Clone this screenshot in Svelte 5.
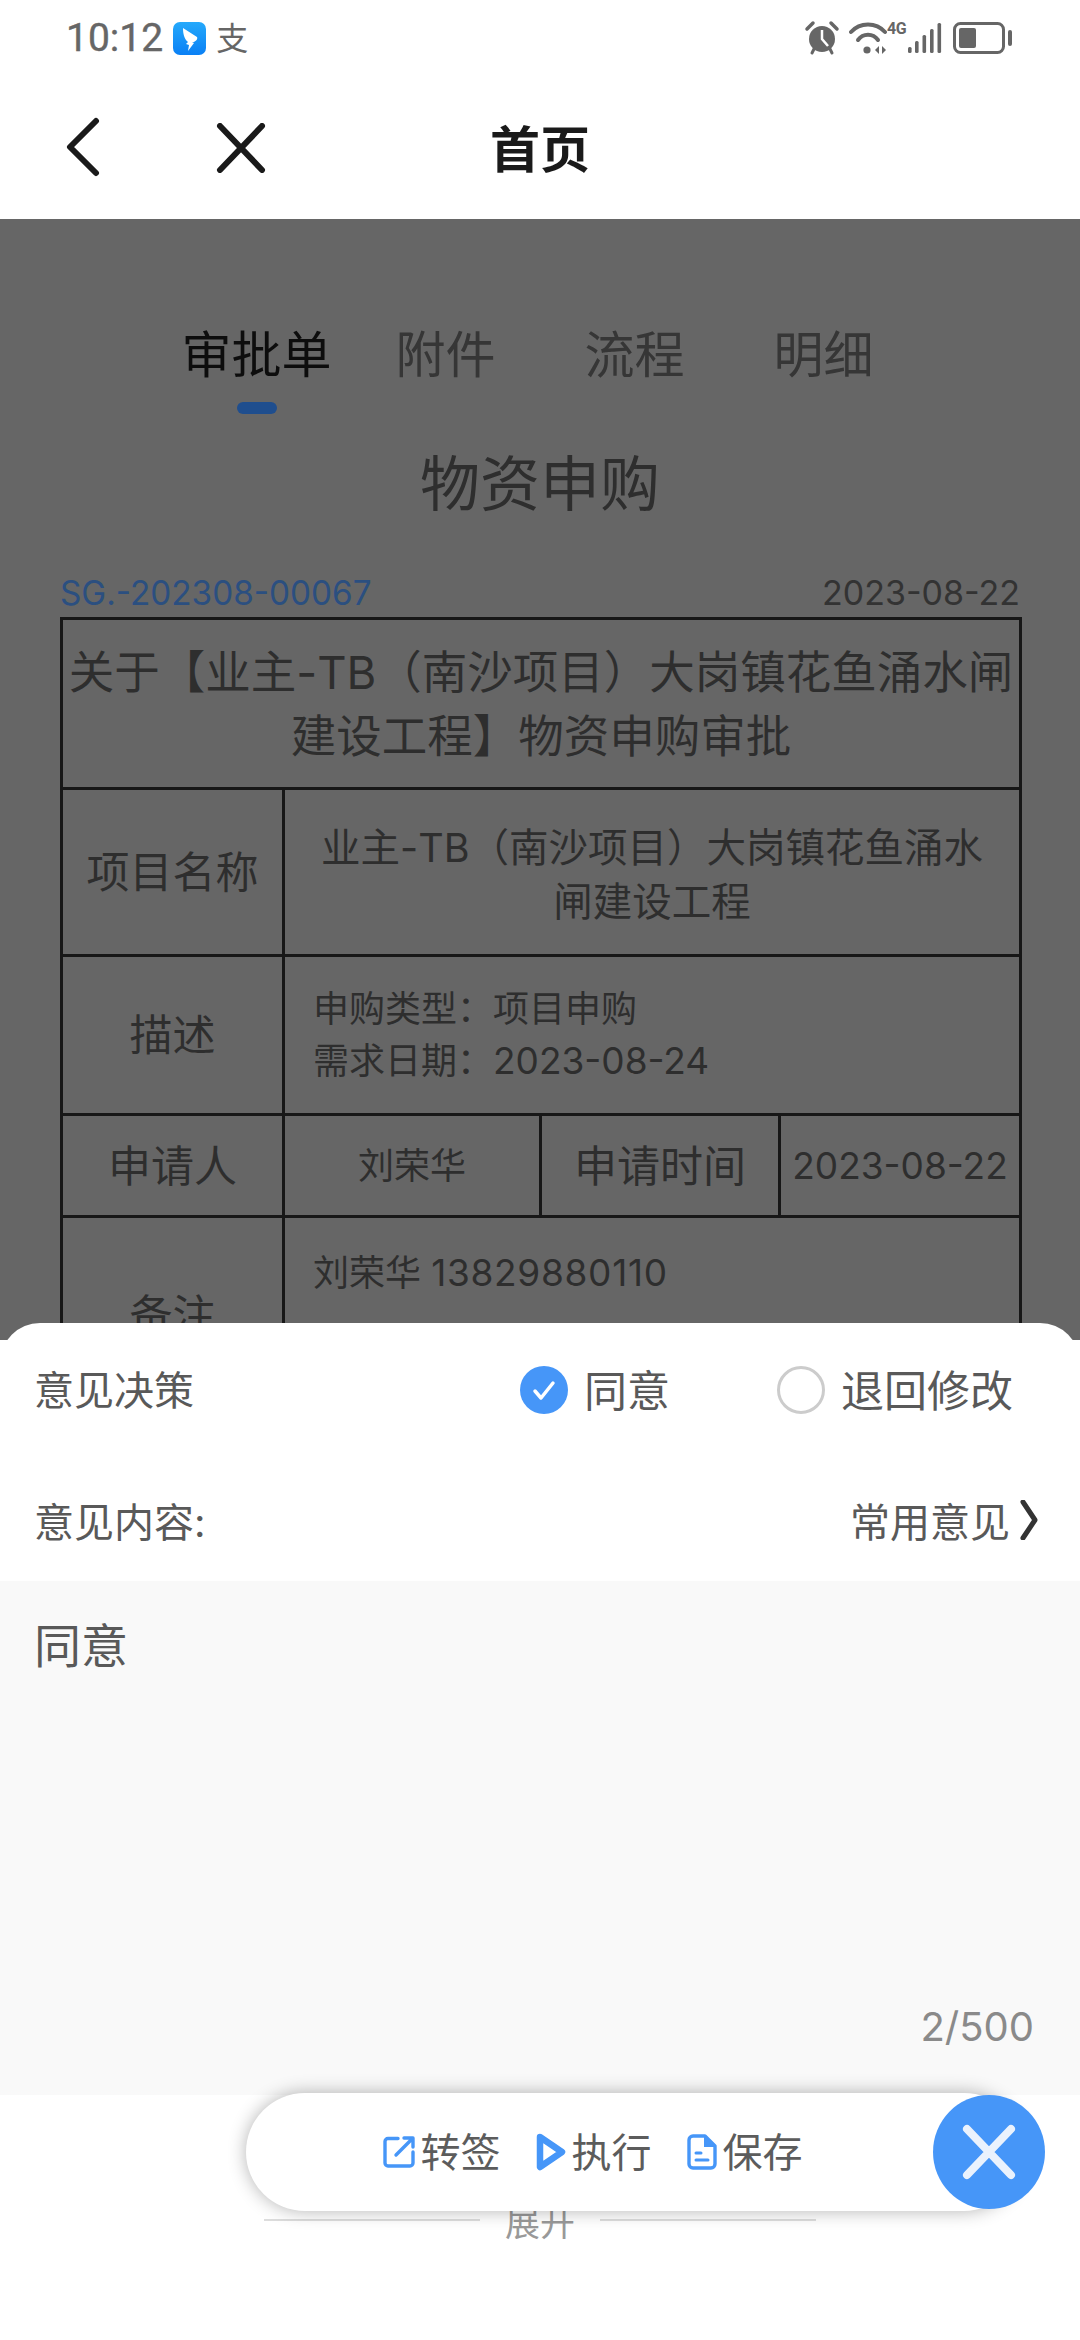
<script>
	const tabs = ['审批单', '附件', '流程', '明细'];
	let active = 0;
	let decision = 'agree';
</script>

<div class="page">
	<header class="status">
		<div class="status-left">
			<span class="time">10:12</span>
			<svg class="app" viewBox="0 0 33 33" width="33" height="33">
				<defs>
					<linearGradient id="ding" x1="0" y1="0" x2="0" y2="1">
						<stop offset="0" stop-color="#25a9fb" />
						<stop offset="1" stop-color="#0a80f5" />
					</linearGradient>
				</defs>
				<rect width="33" height="33" rx="7" fill="url(#ding)" />
				<path d="M10 6 L24 15 C25 17 23 19 21 20 L19 20 L21 21 L15 29 L16 23 L13 22 L15 20 C11 17 10 11 10 6Z" fill="#fff" />
			</svg>
			<span class="zhi">支</span>
		</div>
		<div class="status-right">
			<svg viewBox="0 0 36 36" width="36" height="36">
				<circle cx="18" cy="19" r="13" fill="#666" />
				<path d="M18 10 L18 19 L24 26" fill="none" stroke="#fff" stroke-width="2.5" />
				<path d="M3 9 L9 3 M27 3 L33 9" stroke="#666" stroke-width="3.5" stroke-linecap="round" />
				<path d="M8 33 L10 29 M28 33 L26 29" stroke="#666" stroke-width="3" stroke-linecap="round" />
			</svg>
			<svg class="wifi" viewBox="0 0 40 36" width="40" height="36">
				<path d="M2 12 C11 2 27 2 36 12" fill="none" stroke="#666" stroke-width="4" stroke-linecap="round" />
				<path d="M9 20 C14 13 24 13 29 20" fill="none" stroke="#666" stroke-width="4" stroke-linecap="round" />
				<circle cx="18" cy="30" r="3.6" fill="#666" />
				<path d="M30 26 L30 34 L26 30Z M33 26 L33 34 L37 30Z" fill="#666" />
			</svg>
			<div class="net">
				<span class="four-g">4G</span>
				<svg viewBox="0 0 34 32" width="34" height="32">
					<rect x="0" y="25" width="3.6" height="6" rx="1.5" fill="#666" />
					<rect x="7" y="19" width="3.6" height="12" rx="1.5" fill="#666" />
					<rect x="14.5" y="13" width="3.6" height="18" rx="1.5" fill="#666" />
					<rect x="22" y="7" width="3.6" height="24" rx="1.5" fill="#666" />
					<rect x="29.5" y="1" width="3.6" height="30" rx="1.5" fill="#666" />
				</svg>
			</div>
			<svg class="battery" viewBox="0 0 60 32" width="60" height="32">
				<rect x="1.5" y="1.5" width="49" height="29" rx="6" fill="none" stroke="#666" stroke-width="3" />
				<rect x="6" y="6" width="17" height="20" rx="2" fill="#666" />
				<rect x="55" y="8" width="4" height="16" rx="2" fill="#666" />
			</svg>
		</div>
	</header>

	<nav class="navbar">
		<svg class="nav-back" viewBox="0 0 36 60" width="36" height="60">
			<path d="M31 4 L5 30 L31 56" fill="none" stroke="#1a1a1a" stroke-width="6" stroke-linecap="round" stroke-linejoin="round" />
		</svg>
		<svg class="nav-close" viewBox="0 0 50 50" width="50" height="50">
			<path d="M4 3 L46 47 M46 3 L4 47" fill="none" stroke="#1a1a1a" stroke-width="6" stroke-linecap="round" />
		</svg>
		<h1>首页</h1>
	</nav>

	<main class="doc">
		<div class="tabs">
			{#each tabs as tab, i}
				<div class="tab" class:active={active === i}>
					<span>{tab}</span>
					{#if active === i}<i class="tab-bar"></i>{/if}
				</div>
			{/each}
		</div>

		<h2 class="doc-title">物资申购</h2>

		<div class="doc-meta">
			<span class="doc-no">SG.-202308-00067</span>
			<span>2023-08-22</span>
		</div>

		<table>
			<colgroup>
				<col style="width: 222px" />
				<col style="width: 257px" />
				<col style="width: 239px" />
				<col style="width: 241px" />
			</colgroup>
			<tbody>
				<tr class="r-title">
					<td colspan="4" class="big">关于【业主-TB（南沙项目）大岗镇花鱼涌水闸<br />建设工程】物资申购审批</td>
				</tr>
				<tr class="r-project">
					<th>项目名称</th>
					<td colspan="3" class="project">业主-TB（南沙项目）大岗镇花鱼涌水<br />闸建设工程</td>
				</tr>
				<tr class="r-desc">
					<th>描述</th>
					<td colspan="3" class="left">申购类型：项目申购<br />需求日期：<span class="num">2023-08-24</span></td>
				</tr>
				<tr class="r-person">
					<th>申请人</th>
					<td>刘荣华</td>
					<th>申请时间</th>
					<td class="num">2023-08-22</td>
				</tr>
				<tr class="r-remark">
					<th>备注</th>
					<td colspan="3" class="left top">刘荣华 <span class="phone">13829880110</span></td>
				</tr>
			</tbody>
		</table>
	</main>

	<section class="sheet">
		<div class="row row-decision">
			<span class="row-label">意见决策</span>
			<div class="radios">
				<div class="radio">
					<span class="dot" class:on={decision === 'agree'}>
						<svg viewBox="0 0 48 48" width="48" height="48">
							<path d="M15 25 L21 32 L33 17" fill="none" stroke="#fff" stroke-width="3.5" stroke-linecap="round" stroke-linejoin="round" />
						</svg>
					</span>
					<span class="radio-text">同意</span>
				</div>
				<div class="radio">
					<span class="dot" class:on={decision === 'back'}></span>
					<span class="radio-text">退回修改</span>
				</div>
			</div>
		</div>
		<div class="row row-content">
			<span class="row-label">意见内容:</span>
			<div class="common">
				<span>常用意见</span>
				<svg viewBox="0 0 18 40" width="18" height="40">
					<path d="M3 2 L15 20 L3 38" fill="none" stroke="#333" stroke-width="5" stroke-linecap="round" stroke-linejoin="round" />
				</svg>
			</div>
		</div>
		<div class="opinion">
			<p>同意</p>
			<span class="count">2/500</span>
		</div>
		<div class="expand">
			<i></i>
			<span>展开</span>
			<i></i>
		</div>
	</section>

	<div class="bar">
		<div class="actions">
			<div class="action">
				<svg viewBox="0 0 32 32" width="32" height="32">
					<path d="M15 2.5 H5 A3 3 0 0 0 2 5.500 V27 A3 3 0 0 0 5 30 H27 A3 3 0 0 0 30 27 V16" fill="none" stroke="#4696f8" stroke-width="3.4" stroke-linecap="round" />
					<path d="M21 2 H30 V11 M29.500 2.500 L13 19" fill="none" stroke="#4696f8" stroke-width="3.400" stroke-linecap="round" stroke-linejoin="round" />
				</svg>
				<span>转签</span>
			</div>
			<div class="action">
				<svg viewBox="0 0 30 38" width="30" height="38">
					<path d="M4 4 L26 19 L4 34Z" fill="none" stroke="#4696f8" stroke-width="6.500" stroke-linejoin="round" />
				</svg>
				<span>执行</span>
			</div>
			<div class="action">
				<svg viewBox="0 0 30 36" width="30" height="36">
					<path d="M18 2 H6 A4 4 0 0 0 2 6 V30 A4 4 0 0 0 6 34 H24 A4 4 0 0 0 28 30 V12Z" fill="none" stroke="#4696f8" stroke-width="3.400" stroke-linejoin="round" />
					<path d="M17 2 V13 H28Z" fill="#4696f8" />
					<path d="M9 19 H14 M9 26 H21" stroke="#4696f8" stroke-width="3" stroke-linecap="round" />
				</svg>
				<span>保存</span>
			</div>
		</div>
		<div class="close">
			<svg viewBox="0 0 56 56" width="56" height="56">
				<path d="M6 5 L50 51 M50 5 L6 51" stroke="#eaf2fd" stroke-width="8" stroke-linecap="round" />
			</svg>
		</div>
	</div>
</div>

<style>
	:global(body) {
		margin: 0;
		background: #fff;
	}

	.page {
		position: relative;
		width: 1080px;
		height: 2340px;
		overflow: hidden;
		background: #fff;
		font-family: Inter, 'Noto Sans CJK SC', sans-serif;
		color: #666;
	}

	.status {
		display: flex;
		justify-content: space-between;
		align-items: center;
		height: 76px;
		padding: 0 67px 0 66px;
		box-sizing: border-box;
	}

	.status-left,
	.status-right {
		display: flex;
		align-items: center;
	}

	.status-left {
		gap: 10px;
	}

	.time {
		font-family: Roboto, sans-serif;
		font-size: 39px;
		line-height: 76px;
		color: #666;
		-webkit-text-stroke: 0.4px #666;
	}

	.zhi {
		font-size: 32px;
		line-height: 33px;
		color: #666;
	}

	.status-right {
		gap: 7px;
	}

	.wifi {
		margin-left: 2px;
	}

	.net {
		position: relative;
		padding-left: 20px;
		margin-left: -8px;
		display: flex;
		margin-right: 4px;
	}

	.four-g {
		position: absolute;
		left: -1px;
		top: -2px;
		font-family: Roboto, sans-serif;
		font-weight: 700;
		font-size: 16px;
		line-height: 18px;
		color: #666;
		letter-spacing: -0.5px;
	}

	.navbar {
		position: relative;
		height: 143px;
		padding-top: 6px;
		box-sizing: border-box;
		display: flex;
		align-items: center;
		justify-content: center;
	}

	.navbar h1 {
		margin: 0;
		font-size: 50px;
		font-weight: 700;
		color: #1a1a1a;
		line-height: 137px;
	}

	.nav-back {
		position: absolute;
		left: 65px;
		top: 41px;
	}

	.nav-close {
		position: absolute;
		left: 216px;
		top: 47px;
	}

	.doc {
		height: 1121px;
		background: #666;
		overflow: hidden;
	}

	.tabs {
		display: flex;
		justify-content: center;
		padding-top: 101px;
	}

	.tab {
		position: relative;
		width: 189px;
		height: 70px;
		text-align: center;
		font-size: 50px;
		line-height: 70px;
		color: #363636;
	}

	.tab.active {
		color: #0d0d0d;
	}

	.tab-bar {
		position: absolute;
		left: 75px;
		top: 82px;
		width: 40px;
		height: 12px;
		border-radius: 6px;
		background: #1f4e8e;
	}

	.doc-title {
		margin: 50px 0 0;
		text-align: center;
		font-size: 60px;
		font-weight: 400;
		line-height: 88px;
		color: #2e2e2e;
	}

	.doc-meta {
		display: flex;
		justify-content: space-between;
		margin: 41px 60px 0;
		font-size: 34px;
		line-height: 48px;
		color: #333;
	}

	.doc-no {
		color: #2b4f80;
		font-size: 33.300px;
	}

	table {
		width: 959px;
		margin: 0 60px;
		table-layout: fixed;
		border-collapse: collapse;
		color: #2e2e2e;
	}

	td,
	th {
		border: 3px solid #171717;
		padding: 0;
		text-align: center;
		font-weight: 400;
	}

	th {
		font-size: 43px;
		line-height: 58px;
	}

	td {
		font-size: 36px;
		line-height: 52px;
	}

	td.big {
		font-size: 45.500px;
		line-height: 64px;
		padding-top: 2px;
	}

	td.project {
		font-size: 39.500px;
		line-height: 54px;
		padding-top: 6px;
	}

	td.left {
		text-align: left;
		padding-left: 28px;
	}

	td.top {
		vertical-align: top;
		padding-top: 29px;
	}

	.num {
		font-size: 37px;
	}

	.phone {
		font-size: 37px;
		letter-spacing: 0.7px;
	}

	.r-title {
		height: 170px;
	}

	.r-project {
		height: 167px;
	}

	.r-desc {
		height: 159px;
	}

	.r-person {
		height: 102px;
	}

	.r-remark {
		height: 197px;
	}

	.sheet {
		position: absolute;
		left: 0;
		right: 0;
		top: 1323px;
		bottom: 0;
		background: #fff;
		border-radius: 40px 40px 0 0;
	}

	.row {
		display: flex;
		justify-content: space-between;
		align-items: center;
		padding: 0 34px;
		font-size: 40px;
		color: #595959;
	}

	.row-decision {
		height: 134px;
	}

	.row-decision .row-label {
		margin-bottom: 5px;
	}

	.row-content {
		height: 124px;
		padding-top: 2px;
		box-sizing: border-box;
	}

	.radios {
		display: flex;
		gap: 107px;
		padding-right: 33px;
		box-sizing: border-box;
	}

	.radio {
		display: flex;
		align-items: center;
		gap: 16px;
		font-size: 43px;
	}

	.radio-text {
		margin-bottom: 5px;
	}

	.dot {
		width: 48px;
		height: 48px;
		box-sizing: border-box;
		border-radius: 50%;
		border: 3px solid #ccc;
		display: block;
	}

	.dot.on {
		border: 0;
		background: #4696f8;
	}

	.common {
		display: flex;
		align-items: center;
		gap: 10px;
		margin-right: 8px;
	}

	.opinion {
		position: relative;
		height: 514px;
		background: #f9f9f9;
		padding: 33px 34px;
		box-sizing: border-box;
	}

	.opinion p {
		margin: 0;
		font-size: 47px;
		line-height: 64px;
		color: #595959;
	}

	.count {
		position: absolute;
		right: 46px;
		bottom: 41px;
		font-size: 40px;
		line-height: 54px;
		color: #8a8a8a;
	}

	.expand {
		display: flex;
		justify-content: center;
		align-items: center;
		gap: 25px;
		padding-top: 103px;
		font-size: 35px;
		line-height: 50px;
		color: #999;
	}

	.expand i {
		width: 216px;
		height: 2px;
		background: #ddd;
		margin-bottom: 6px;
	}

	.bar {
		position: absolute;
		left: 246px;
		top: 2093px;
		width: 799px;
		height: 118px;
		display: flex;
		align-items: center;
	}

	.actions {
		flex: 1;
		height: 118px;
		margin-right: -90px;
		padding-right: 84px;
		box-sizing: border-box;
		border-radius: 59px;
		background: #fff;
		box-shadow: 0 0 18px rgba(0, 0, 0, 0.3);
		display: flex;
		justify-content: center;
		align-items: center;
		gap: 35px;
	}

	.action {
		display: flex;
		align-items: center;
		gap: 6px;
		font-size: 40px;
		color: #5c5c5c;
	}

	.action span {
		margin-bottom: 4px;
	}

	.close {
		position: relative;
		flex: none;
		width: 112px;
		height: 114px;
		border-radius: 50%;
		background: #4696f8;
		display: flex;
		justify-content: center;
		align-items: center;
	}
</style>
